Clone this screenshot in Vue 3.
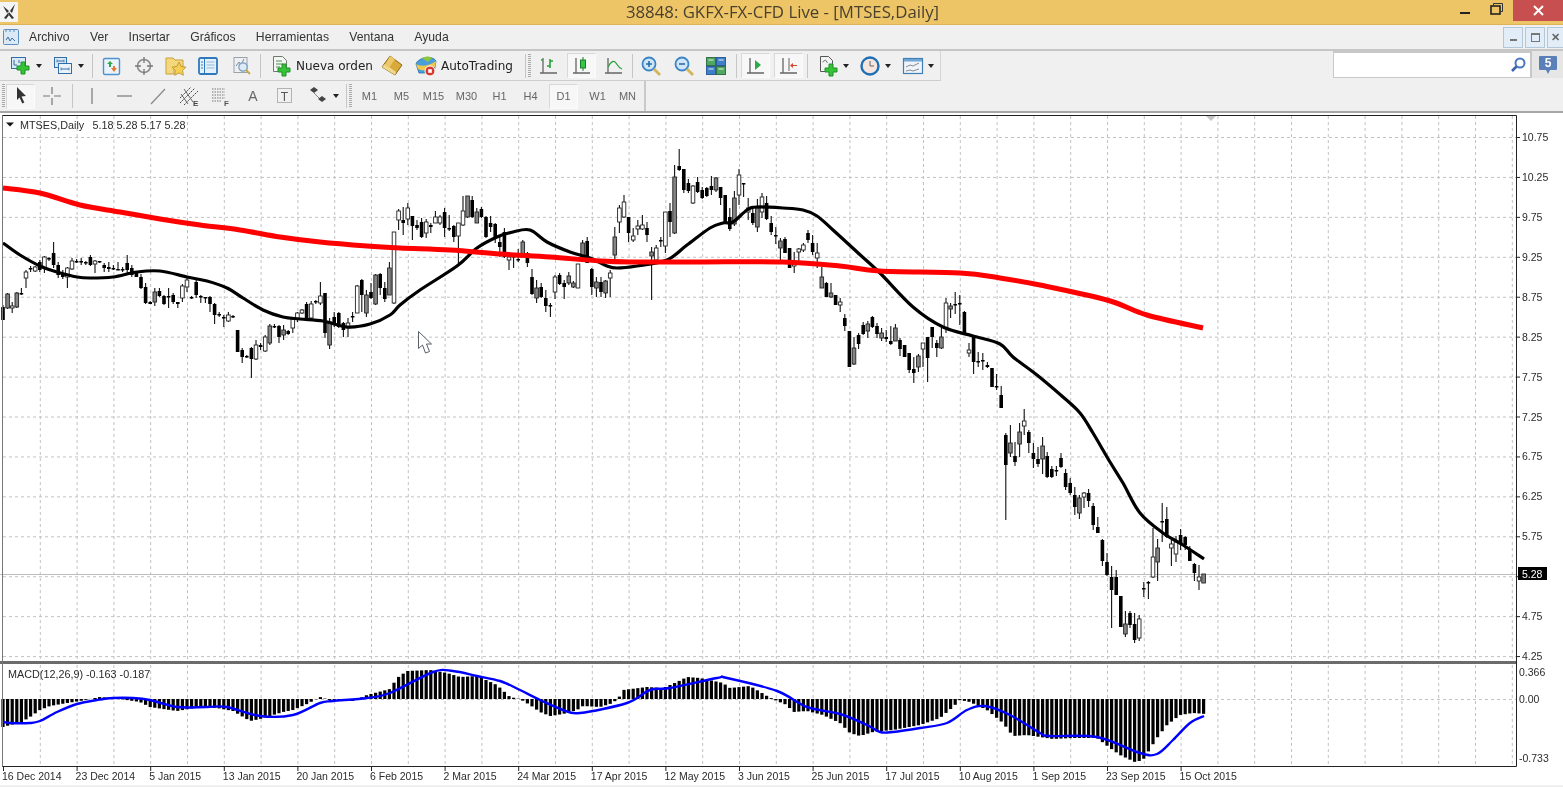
<script setup>
import { computed } from 'vue'

const icons = {
  addChart: '<rect x="1.5" y="2.5" width="14" height="11" fill="#dbe9f6" stroke="#2f6ea8"/><path d="M4 5v5h3M9 5v3" stroke="#2f6ea8" fill="none"/><path d="M11 7h4v4h4v4h-4v4h-4v-4H7v-4h4z" fill="#35c435" stroke="#1f8f2a"/>',
  profiles: '<rect x="2.5" y="2.5" width="12" height="10" fill="#dbe9f6" stroke="#2f6ea8"/><rect x="6.5" y="8.5" width="13" height="10" fill="#eaf2fa" stroke="#2f6ea8"/><path d="M5 6h7M9 14h8" stroke="#2f6ea8"/><path d="M5 4.5v3M12 4.5v3M9 12.5v3M17 12.5v3" stroke="#5a86ad"/>',
  market: '<rect x="2.5" y="3.5" width="16" height="16" rx="1.5" fill="#eaf3fb" stroke="#4d93cf" stroke-width="1.4"/><path d="M6 9l3-3 3 3h-2v3H8V9z" fill="#2fa84a"/><path d="M10 13h2v-2h2v2h2l-3 4z" fill="#e8772e"/>',
  target: '<circle cx="11" cy="11" r="6.5" fill="none" stroke="#8b8b8b" stroke-width="1.6"/><path d="M11 2v6M11 14v6M2 11h6M14 11h6" stroke="#777" stroke-width="1.3"/>',
  folderStar: '<path d="M1 3h7l2 2h8v7H9v7H1z" fill="#f5d77c" stroke="#c7a03c"/><path d="M14 7l2.2 4.5 4.8.6-3.4 3.4.8 4.8-4.4-2.3-4.4 2.3.8-4.8-3.4-3.4 4.8-.6z" fill="#f4cf52" stroke="#b48f2c" stroke-width=".8"/>',
  terminal: '<rect x="2" y="3" width="18" height="16" rx="1.5" fill="#e6f0fa" stroke="#2f78bd" stroke-width="1.8"/><path d="M7.5 4v14" stroke="#2f78bd"/><path d="M9.5 7h8M9.5 10h8M9.5 13h8" stroke="#93b7d8"/><path d="M4 7h2M4 10h2M4 13h2" stroke="#2f78bd"/>',
  tester: '<rect x="3" y="2.5" width="13" height="15" fill="#eef0f3" stroke="#9aa1a8"/><path d="M5 11l3-4 2 3 3-6" fill="none" stroke="#7c8a99"/><circle cx="12" cy="12" r="4.2" fill="#dcebf7" stroke="#7a9cbd" stroke-width="1.2"/><path d="M15 15l4 4" stroke="#c9a64a" stroke-width="2"/>',
  newOrder: '<path d="M3.5 1.5h9l4 4v11h-13z" fill="#f4f6f4" stroke="#6f7a6f"/><path d="M6 6h6M6 9h7M6 12h4" stroke="#4f8f4f"/><path d="M12 9h4v4h4v4h-4v4h-4v-4H8v-4h4z" fill="#35c435" stroke="#1f8f2a"/>',
  gold: '<path d="M9 1l12 9-7 10L1 12z" fill="#d9a93a" stroke="#8c6a1d"/><path d="M1 12l13 8 1-3L4 9z" fill="#f0d98f"/><path d="M9 1L4 10l4 3 6-9z" fill="#ecc769"/>',
  auto: '<path d="M1 9C3 2 18 0 21 6l-2 12H4z" fill="#4a9fd8" stroke="#2c6ea0" stroke-width=".8"/><path d="M1 9c4 3 14 2 20-3l-1 6c-5 4-13 4-17 2z" fill="#f0c94c"/><path d="M7 3c4-2 8-2 10 0l-4 4z" fill="#8cc63f"/><circle cx="15" cy="16" r="5" fill="#d43a2e" stroke="#fff"/><rect x="13.2" y="14.2" width="3.6" height="3.6" fill="#fff"/>',
  bars: '<path d="M5 3v15M2 18h17" stroke="#666" stroke-width="1.3" fill="none"/><path d="M3 5h2M12 4v9M12 6h3M9 11h3" stroke="#28a138" stroke-width="1.6" fill="none"/>',
  candles: '<path d="M5 3v15M2 18h17" stroke="#666" stroke-width="1.3" fill="none"/><path d="M12 2v14" stroke="#1c7d2b"/><rect x="9.5" y="5" width="5" height="8" fill="#37c447" stroke="#1c7d2b"/>',
  line: '<path d="M5 3v15M2 18h17" stroke="#666" stroke-width="1.3" fill="none"/><path d="M5 12c3-6 6-7 8-4 2 3 3 5 6 6" stroke="#28a138" stroke-width="1.3" fill="none"/>',
  zoomIn: '<circle cx="9" cy="9" r="6.5" fill="#cfe6f8" stroke="#3b85c5" stroke-width="1.8"/><path d="M6 9h6M9 6v6" stroke="#2b6da8" stroke-width="1.6"/><path d="M14 14l6 6" stroke="#d3b458" stroke-width="2.8"/>',
  zoomOut: '<circle cx="9" cy="9" r="6.5" fill="#cfe6f8" stroke="#3b85c5" stroke-width="1.8"/><path d="M6 9h6" stroke="#2b6da8" stroke-width="1.6"/><path d="M14 14l6 6" stroke="#d3b458" stroke-width="2.8"/>',
  tile: '<rect x="1.5" y="2.5" width="9" height="8" fill="#4ea860" stroke="#33704a"/><rect x="11.5" y="2.5" width="9" height="8" fill="#3f7fc9" stroke="#2d5f9a"/><rect x="1.5" y="11.5" width="9" height="8" fill="#3f7fc9" stroke="#2d5f9a"/><rect x="11.5" y="11.5" width="9" height="8" fill="#4ea860" stroke="#33704a"/><path d="M3.5 5h5M13.5 5h5M3.5 14h5M13.5 14h5" stroke="#e8f2ea"/>',
  scroll: '<path d="M5 3v15M2 18h17" stroke="#666" stroke-width="1.3" fill="none"/><path d="M10 5l6 5-6 5z" fill="#2fa84a"/>',
  shift: '<path d="M5 3v15M2 18h17" stroke="#666" stroke-width="1.3" fill="none"/><path d="M11 3v13" stroke="#666"/><path d="M19 10h-4v-2l-3 2.5 3 2.5v-2h4z" fill="#d94a2b"/>',
  indicators: '<path d="M3.5 1.5h8l4 4v11h-12z" fill="#f3f3f3" stroke="#555"/><path d="M5.5 7l3-2 2 3" fill="none" stroke="#777"/><path d="M12 9h4v4h4v4h-4v4h-4v-4H8v-4h4z" fill="#35c435" stroke="#1f8f2a"/>',
  clock: '<circle cx="11" cy="11" r="8.5" fill="#f4e6df" stroke="#1f6fb5" stroke-width="2.4"/><path d="M11 6v5h4" stroke="#666" fill="none"/>',
  template: '<rect x="1.5" y="3.5" width="19" height="15" fill="#eef4fa" stroke="#3f7fb5" stroke-width="1.2"/><rect x="2" y="4" width="18" height="2.5" fill="#6fa6d6"/><path d="M4 12l4-2 3 1 6-3M4 16l4-1 3 1 6-2" stroke="#8a8a8a" fill="none"/>',
  cursor: '<path d="M7 2l9 9-4.500.4 2.800 6-2 1-2.800-6L7 15z" fill="#333"/>',
  cross: '<path d="M11 2v7M11 13v7M2 11h7M13 11h7" stroke="#777" stroke-width="1.2"/>',
  vline: '<path d="M11 3v16" stroke="#777" stroke-width="1.2"/>',
  hline: '<path d="M3 11h15" stroke="#777" stroke-width="1.2"/>',
  trend: '<path d="M4 19L18 4" stroke="#888" stroke-width="1.2"/>',
  channel: '<path d="M2 13L13 2M2 18L17 3M6 20L20 6" stroke="#444" stroke-dasharray="2 1"/><path d="M6 4l9 13M3 9l7 10" stroke="#666"/><text x="15" y="21" font-size="8" font-weight="700" font-family="Liberation Sans" fill="#444">E</text>',
  fib: '<path d="M3 4h13M3 7h13M3 10h13M3 13h13M3 16h9" stroke="#777" stroke-dasharray="1.5 1"/><text x="15" y="21" font-size="8" font-weight="700" font-family="Liberation Sans" fill="#555">F</text>',
  letterA: '<text x="11" y="16" text-anchor="middle" font-size="14" font-family="Liberation Sans" fill="#666">A</text>',
  textBox: '<rect x="3.5" y="3.5" width="14" height="14" fill="none" stroke="#777" stroke-dasharray="1 1"/><text x="10.5" y="15.5" text-anchor="middle" font-size="12" font-family="Liberation Sans" fill="#555">T</text>',
  arrows: '<path d="M3 5l4-3 4 3-4 3z" fill="#444"/><path d="M11 14l4-3 4 3-4 3z" fill="#444"/><path d="M7 8l5 5" stroke="#888"/>',
  logo: '<path d="M3 4l6 5-2 2zM15 2l-5 7 2 2zM9 10l5 6-2 1-4-5zM8 11l-4 5 2 1 3-4z" fill="#333"/>',
  menuIcon: '<rect x="1.5" y="1.5" width="15" height="15" rx="1" fill="#dbe8f5" stroke="#5a8fc0"/><path d="M4 1v3M8 1v3M12 1v3" stroke="#5a8fc0"/><path d="M4 12l2-3 2 4 2-3 3 3" stroke="#3d6f9f" fill="none"/>',
}

// left edge of every toolbar item, the margins are worked out from these
const withGaps = (items, start) => {
  let end = start
  return items.map((item) => {
    const gap = item.at - end
    end = item.at + item.w
    return { ...item, gap }
  })
}

const row1 = withGaps([
  { at: 9, w: 33, icon: 'addChart', arrow: true },
  { at: 51, w: 33, icon: 'profiles', arrow: true },
  { at: 92, w: 1, sep: true },
  { at: 101, w: 22, icon: 'market' },
  { at: 133, w: 22, icon: 'target' },
  { at: 165, w: 22, icon: 'folderStar' },
  { at: 197, w: 22, icon: 'terminal' },
  { at: 231, w: 22, icon: 'tester' },
  { at: 260, w: 1, sep: true },
  { at: 270, w: 104, icon: 'newOrder', text: 'Nueva orden' },
  { at: 381, w: 22, icon: 'gold' },
  { at: 415, w: 103, icon: 'auto', text: 'AutoTrading' },
  { at: 525, w: 1, sep: true },
  { at: 528, w: 4, grip: true },
  { at: 539, w: 22, icon: 'bars' },
  { at: 568, w: 29, icon: 'candles', active: true },
  { at: 604, w: 22, icon: 'line' },
  { at: 633, w: 1, sep: true },
  { at: 641, w: 22, icon: 'zoomIn' },
  { at: 674, w: 22, icon: 'zoomOut' },
  { at: 706, w: 22, icon: 'tile' },
  { at: 737, w: 1, sep: true },
  { at: 742, w: 29, icon: 'scroll', active: true },
  { at: 775, w: 29, icon: 'shift', active: true },
  { at: 808, w: 1, sep: true },
  { at: 817, w: 33, icon: 'indicators', arrow: true },
  { at: 859, w: 33, icon: 'clock', arrow: true },
  { at: 902, w: 33, icon: 'template', arrow: true },
], 0)

const row2 = withGaps([
  { at: 2, w: 3, grip: true },
  { at: 6, w: 29, icon: 'cursor', active: true },
  { at: 41, w: 22, icon: 'cross' },
  { at: 72, w: 1, sep: true },
  { at: 81, w: 22, icon: 'vline' },
  { at: 114, w: 22, icon: 'hline' },
  { at: 147, w: 22, icon: 'trend' },
  { at: 178, w: 22, icon: 'channel' },
  { at: 209, w: 22, icon: 'fib' },
  { at: 242, w: 22, icon: 'letterA' },
  { at: 274, w: 22, icon: 'textBox' },
  { at: 306, w: 33, icon: 'arrows', arrow: true },
  { at: 346, w: 1, sep: true },
  { at: 349, w: 3, grip: true },
  { at: 355, w: 29, tf: 'M1' },
  { at: 387, w: 29, tf: 'M5' },
  { at: 419, w: 29, tf: 'M15' },
  { at: 452, w: 29, tf: 'M30' },
  { at: 485, w: 29, tf: 'H1' },
  { at: 516, w: 29, tf: 'H4' },
  { at: 549, w: 29, tf: 'D1', active: true },
  { at: 583, w: 29, tf: 'W1' },
  { at: 613, w: 29, tf: 'MN' },
], 0)

const menu = ['Archivo', 'Ver', 'Insertar', 'Gráficos', 'Herramientas', 'Ventana', 'Ayuda']

const barX = (i) => 3 + 4.6 * i

// 0 black, 1 gray, 2 white: type, body top, body bottom, wick top, wick bottom
const raw = [
  [0,307,320,305,320],[1,294,308,293,309],[2,306,308,302,313],[1,293,307,292,308],[0,293,294,288,295],
  [2,272,278,270,288],[0,268,269,266,272],[2,267,271,266,272],[0,262,270,260,272],[2,257,268,256,273],
  [0,258,259,257,261],[0,253,265,242,268],[0,265,275,262,278],[0,273,277,270,279],[2,268,277,267,288],
  [2,261,269,258,270],[0,261,262,259,263],[0,261,262,258,265],[0,262,263,261,265],[0,257,265,255,266],
  [2,261,264,260,273],[0,261,262,261,263],[0,265,268,263,272],[0,267,269,262,272],[0,268,269,265,270],
  [0,269,270,262,270],[0,269,270,267,272],[0,263,270,255,273],[0,268,275,265,277],[0,273,277,271,277],
  [0,277,288,274,289],[0,287,303,283,304],[0,302,304,301,304],[1,292,302,288,306],[0,291,296,288,297],
  [0,296,304,295,305],[0,296,297,288,308],[0,295,302,293,304],[0,302,304,302,308],[2,286,298,284,302],
  [2,280,287,278,292],[0,297,298,296,299],[0,282,295,278,298],[0,296,297,295,303],[0,297,298,297,303],
  [0,297,304,296,312],[0,304,315,303,324],[0,314,315,312,317],[0,317,318,315,327],[2,315,321,312,322],
  [0,316,317,315,318],[0,330,352,330,352],[0,350,357,348,363],[0,356,357,355,358],[0,348,359,347,378],
  [2,345,359,340,360],[0,345,347,343,350],[2,337,351,335,352],[1,326,343,324,345],[0,326,327,324,328],
  [0,326,337,325,343],[1,330,335,325,340],[0,331,334,330,335],[2,319,328,318,333],[2,313,319,312,322],
  [2,310,313,309,314],[0,304,318,302,320],[2,304,318,301,320],[0,301,302,300,304],[2,296,303,282,305],
  [0,293,333,293,338],[1,322,345,318,349],[0,317,325,312,327],[0,313,327,312,328],[0,323,330,322,337],
  [2,323,328,318,337],[0,316,317,312,322],[2,286,313,285,313],[0,280,295,279,312],[1,295,313,290,317],
  [0,292,298,283,299],[1,275,304,274,305],[0,274,288,273,295],[0,288,299,282,302],[1,268,295,262,295],
  [2,232,303,232,304],[2,211,220,209,230],[0,220,223,207,235],[2,208,219,203,225],[0,216,226,216,240],
  [0,225,228,220,230],[0,222,237,218,238],[2,222,233,219,238],[0,225,227,223,233],[2,217,223,211,223],
  [2,217,223,215,225],[0,212,228,208,237],[0,228,229,215,231],[0,226,237,225,242],[2,223,236,223,263],
  [2,211,225,196,226],[1,196,217,196,218],[0,200,217,196,218],[1,212,223,208,223],[0,209,217,207,218],
  [0,217,237,216,238],[0,223,227,216,232],[0,224,238,223,243],[0,242,247,237,257],[0,232,257,228,258],
  [2,257,260,252,270],[0,256,257,253,268],[0,259,260,249,262],[1,242,257,240,257],[0,253,263,252,267],
  [0,277,294,269,295],[1,288,298,280,303],[0,287,297,283,298],[0,298,306,290,312],[0,305,306,303,317],
  [2,277,292,275,299],[0,275,284,273,285],[0,283,287,280,299],[1,276,283,272,285],[1,283,287,281,288],
  [2,264,288,264,288],[1,243,257,240,262],[0,241,263,237,263],[0,269,287,268,295],[1,282,288,277,297],
  [0,282,292,277,297],[1,281,293,280,298],[2,273,278,270,297],[1,237,255,227,260],[2,208,222,205,233],
  [2,202,217,195,218],[0,217,233,217,242],[2,236,240,228,242],[2,226,229,220,235],[2,225,229,215,230],
  [0,228,235,222,242],[1,252,256,247,300],[2,248,260,245,262],[0,240,241,237,247],[2,212,246,212,253],
  [0,211,222,203,237],[1,177,233,165,234],[0,166,170,149,171],[0,169,190,169,193],[0,183,191,179,193],
  [2,186,203,185,204],[0,182,192,177,193],[0,190,198,187,199],[0,188,196,187,197],[0,186,190,176,195],
  [1,178,190,177,192],[0,187,198,187,205],[0,195,223,195,223],[0,217,229,208,231],[1,198,224,191,226],
  [2,175,195,169,205],[0,183,184,183,197],[2,208,212,198,220],[0,213,223,208,225],[1,208,227,199,232],
  [2,197,212,193,218],[0,203,219,196,220],[0,223,232,216,235],[0,235,236,227,244],[1,241,248,238,262],
  [0,239,253,237,253],[0,248,268,248,268],[2,262,266,252,273],[2,249,252,248,263],[2,245,250,243,252],
  [0,233,240,230,243],[0,243,252,235,255],[2,253,258,243,268],[1,277,288,267,288],[0,283,297,282,297],
  [1,293,297,283,298],[0,295,305,295,305],[2,302,305,298,312],[0,318,326,314,331],[0,331,367,331,367],
  [1,348,364,337,365],[0,335,344,333,349],[0,325,334,322,335],[1,324,331,321,338],[0,317,327,316,328],
  [0,326,334,323,338],[1,333,338,328,341],[0,337,339,330,342],[0,341,344,326,345],[1,328,341,324,341],
  [0,340,349,338,356],[0,345,357,345,357],[0,353,370,353,373],[0,369,373,357,383],[1,356,367,354,372],
  [2,343,349,343,367],[0,337,358,337,382],[0,327,337,327,348],[0,343,348,340,357],[1,337,348,328,349],
  [2,303,328,298,333],[1,306,309,303,318],[0,304,305,292,314],[0,303,304,295,325],[0,312,333,311,333],
  [2,350,353,343,357],[0,336,362,336,374],[0,361,362,352,367],[0,360,361,353,370],[0,365,367,362,368],
  [0,368,387,368,387],[0,386,387,374,390],[0,395,408,386,408],[0,435,465,433,520],[1,443,453,425,457],
  [0,456,462,442,466],[1,432,444,423,457],[2,421,426,409,435],[0,432,443,430,453],[0,453,459,443,468],
  [0,459,464,447,467],[1,446,459,437,474],[0,456,477,452,478],[0,469,477,466,478],[0,470,471,466,476],
  [0,458,467,453,468],[0,473,487,469,490],[0,483,493,478,495],[0,495,507,487,515],[1,498,513,495,519],
  [2,493,497,492,508],[0,493,501,489,507],[0,506,525,503,530],[0,527,533,517,533],[0,540,561,539,566],
  [0,562,575,553,576],[0,577,590,566,628],[0,577,595,570,595],[0,596,627,596,627],[1,624,634,611,637],
  [0,613,625,611,628],[0,624,640,613,643],[2,619,638,615,641],[0,588,589,582,597],[0,582,583,581,599],
  [2,557,577,528,578],[1,548,562,539,581],[0,521,522,503,542],[0,519,537,507,538],[2,544,548,540,566],
  [2,542,554,536,562],[0,535,543,529,550],[0,537,545,536,550],[0,550,561,546,561],[0,564,573,563,581],
  [2,577,581,565,590],[1,574,583,574,583],
]

const candles = raw.map((c, i) => ({
  x: barX(i), kind: c[0], top: c[1], h: c[2] - c[1], wickTop: c[3], wickBottom: c[4],
}))

const fills = ['#000', '#858585', '#fff']

const maBlack = [
  [3,243],[20,255],[40,266],[57,272],[77,277],[90,278],[113,277],[137,272],[160,271],[187,277],[207,281],[227,288],
  [243,298],[263,310],[283,317],[300,319],[323,321],[347,327],[370,324],[390,315],[400,305],[420,290],[457,266],
  [477,248],[497,237],[513,232],[530,230],[547,242],[570,252],[590,258],[607,266],[617,268],[637,266],[667,260],
  [687,245],[710,228],[723,223],[733,222],[747,210],[757,207],[783,208],[803,210],[817,216],[833,230],[857,252],
  [880,273],[913,307],[943,327],[973,336],[1000,344],[1013,357],[1037,375],[1063,397],[1080,413],[1093,433],
  [1110,462],[1123,483],[1140,513],[1163,533],[1183,545],[1204,559],
]

const maRed = [
  [3,188],[40,193],[80,205],[120,212],[160,219],[200,225],[240,230],[280,237],[320,242],[367,246],[400,248],
  [450,250],[500,254],[550,257],[600,261],[633,262],[700,262],[783,262],[840,266],[880,271],[960,273],[1000,278],
  [1040,285],[1107,300],[1147,315],[1203,328],
]

const macdPts = [
  [3,727],[10,725],[20,723],[30,717],[40,710],[50,706],[67,703],[80,701],[90,699],[100,697],[113,698],[140,702],
  [150,707],[163,709],[177,711],[200,707],[217,708],[233,711],[250,721],[260,719],[283,712],[293,710],[307,704],
  [320,697],[333,701],[353,701],[367,695],[390,689],[397,678],[407,671],[430,670],[447,673],[460,677],[477,676],
  [497,685],[510,697],[520,699],[530,705],[540,712],[550,716],[563,714],[577,710],[583,706],[600,707],[613,703],
  [620,696],[623,690],[647,687],[663,688],[677,682],[687,677],[700,678],[723,683],[730,688],[750,686],[767,696],
  [777,701],[787,705],[793,712],[807,711],[823,715],[840,723],[850,733],[860,736],[873,732],[893,730],[920,725],
  [940,718],[953,707],[960,700],[970,702],[987,710],[1003,723],[1013,736],[1027,735],[1040,737],[1053,739],
  [1073,738],[1097,738],[1110,748],[1120,755],[1135,762],[1143,760],[1148,752],[1157,738],[1167,725],[1180,715],
  [1193,713],[1206,714],
]

const histogram = computed(() => {
  const bars = []
  for (let i = 0; i < 262; i++) {
    const x = barX(i)
    const k = macdPts.findIndex((p) => p[0] >= x)
    const b = macdPts[Math.max(k, 1)]
    const a = macdPts[Math.max(k, 1) - 1]
    const y = a[1] + ((b[1] - a[1]) * (x - a[0])) / (b[0] - a[0])
    bars.push({ x, y: Math.min(y, 699), h: Math.abs(y - 699) })
  }
  return bars
})

const macdSignal = [
  [3,722],[10,723],[30,723],[40,721],[57,712],[77,704],[97,700],[113,698],[133,698],[150,700],[177,707],[207,707],
  [227,707],[260,716],[293,715],[320,703],[333,701],[367,698],[390,693],[433,672],[453,671],[477,676],[500,681],
  [520,690],[540,700],[563,710],[580,713],[627,703],[650,690],[670,688],[717,678],[727,678],[777,691],[807,707],
  [840,714],[867,725],[880,732],[893,732],[920,728],[947,723],[967,710],[985,706],[1010,715],[1040,733],[1050,736],
  [1097,737],[1140,753],[1157,754],[1173,740],[1190,723],[1204,716],
]

// catmull-rom through the read-off points, the averages are curves
const smooth = (list) => {
  let d = `M${list[0][0]} ${list[0][1]}`
  for (let i = 0; i < list.length - 1; i++) {
    const p0 = list[Math.max(i - 1, 0)]
    const p1 = list[i]
    const p2 = list[i + 1]
    const p3 = list[Math.min(i + 2, list.length - 1)]
    const c1x = p1[0] + (p2[0] - p0[0]) / 6
    const c1y = p1[1] + (p2[1] - p0[1]) / 6
    const c2x = p2[0] - (p3[0] - p1[0]) / 6
    const c2y = p2[1] - (p3[1] - p1[1]) / 6
    d += `C${c1x.toFixed(1)} ${c1y.toFixed(1)} ${c2x.toFixed(1)} ${c2y.toFixed(1)} ${p2[0]} ${p2[1]}`
  }
  return d
}

const verticals = computed(() => {
  const xs = []
  for (let k = 1; k <= 41; k++) xs.push(3.5 + 36.8 * k)
  return xs
})

const prices = ['10.75','10.25','9.75','9.25','8.75','8.25','7.75','7.25','6.75','6.25','5.75','5.25','4.75','4.25']

const dates = [
  '16 Dec 2014','23 Dec 2014','5 Jan 2015','13 Jan 2015','20 Jan 2015','6 Feb 2015','2 Mar 2015','24 Mar 2015',
  '17 Apr 2015','12 May 2015','3 Jun 2015','25 Jun 2015','17 Jul 2015','10 Aug 2015','1 Sep 2015','23 Sep 2015','15 Oct 2015',
]
</script>

<template>
  <div class="terminal">
    <div class="titlebar">
      <svg class="logo" width="18" height="20" viewBox="0 0 18 20" v-html="icons.logo"></svg>
      <span class="title">38848: GKFX-FX-CFD Live - [MTSES,Daily]</span>
      <div class="win-buttons">
        <span class="win-min"></span>
        <svg class="win-restore" width="13" height="12" viewBox="0 0 13 12">
          <path d="M3.5 2.5V.5h9v8h-2" fill="none" stroke="#333" />
          <rect x="1" y="3" width="9" height="8" fill="none" stroke="#222" stroke-width="1.6" />
        </svg>
        <span class="win-close">
          <svg width="11" height="11" viewBox="0 0 11 11">
            <path d="M1 1l9 9M10 1l-9 9" stroke="#fff" stroke-width="2" />
          </svg>
        </span>
      </div>
    </div>

    <div class="menubar">
      <svg class="menu-icon" width="18" height="18" viewBox="0 0 18 18" v-html="icons.menuIcon"></svg>
      <span v-for="m in menu" :key="m" class="menu-item">{{ m }}</span>
      <div class="mdi">
        <span class="mdi-btn"><i class="mdi-min"></i></span>
        <span class="mdi-btn"><i class="mdi-restore"></i></span>
        <span class="mdi-btn mdi-close">✕</span>
      </div>
    </div>

    <div class="row row-one">
      <div class="strip strip-one">
        <template v-for="(it, n) in row1" :key="n">
          <span v-if="it.sep" class="sep" :style="{ marginLeft: it.gap + 'px' }"></span>
          <span v-else-if="it.grip" class="grip" :style="{ marginLeft: it.gap + 'px' }"></span>
          <div v-else class="tool" :class="{ active: it.active, wide: it.text }"
            :style="{ marginLeft: it.gap + 'px', width: it.w + 'px' }">
            <svg width="22" height="22" viewBox="0 0 22 22" v-html="icons[it.icon]"></svg>
            <span v-if="it.text" class="tool-text">{{ it.text }}</span>
            <i v-if="it.arrow" class="arrow"></i>
          </div>
        </template>
      </div>
      <div class="search">
        <svg width="18" height="18" viewBox="0 0 18 18">
          <circle cx="11" cy="7" r="4.5" fill="#fff" stroke="#4a78c0" stroke-width="2" />
          <path d="M7.5 10.5L3 15" stroke="#3b66ad" stroke-width="2.6" />
        </svg>
      </div>
      <div class="messages">
        <svg width="20" height="22" viewBox="0 0 20 22">
          <path d="M2 2h16a1 1 0 0 1 1 1v12a1 1 0 0 1-1 1h-6l-2 4-2-4H2a1 1 0 0 1-1-1V3a1 1 0 0 1 1-1z" fill="#5b7fb8" />
          <text x="10" y="13" text-anchor="middle" font-size="12" font-weight="700" font-family="Liberation Sans" fill="#fff">5</text>
        </svg>
      </div>
    </div>

    <div class="row row-two">
      <div class="strip strip-two">
        <template v-for="(it, n) in row2" :key="n">
          <span v-if="it.sep" class="sep" :style="{ marginLeft: it.gap + 'px' }"></span>
          <span v-else-if="it.grip" class="grip" :style="{ marginLeft: it.gap + 'px' }"></span>
          <div v-else class="tool" :class="{ active: it.active, tf: it.tf }"
            :style="{ marginLeft: it.gap + 'px', width: it.w + 'px' }">
            <template v-if="it.tf">{{ it.tf }}</template>
            <svg v-else width="22" height="22" viewBox="0 0 22 22" v-html="icons[it.icon]"></svg>
            <i v-if="it.arrow" class="arrow"></i>
          </div>
        </template>
      </div>
    </div>

    <svg class="chart" width="1563" height="672" viewBox="0 113 1563 672">
      <rect x="0" y="113" width="1563" height="672" fill="#fff" />

      <!-- grid -->
      <g stroke="#c2c2c2" stroke-dasharray="3 3">
        <line v-for="x in verticals" :key="x" :x1="x" :x2="x" y1="116" y2="661" />
        <line v-for="x in verticals" :key="'m' + x" :x1="x" :x2="x" y1="665" y2="766" />
        <line v-for="(p, i) in prices" :key="p" x1="3" x2="1516" :y1="137.5 + i * 39.93" :y2="137.5 + i * 39.93" />
        <line x1="3" x2="1516" y1="699.5" y2="699.5" />
      </g>
      <line x1="0" x2="1516" y1="574.5" y2="574.5" stroke="#bdbdbd" />
      <path d="M1206 116h10l-5 5z" fill="#c4c4c4" />

      <!-- candles -->
      <g v-for="c in candles" :key="c.x">
        <line :x1="c.x" :x2="c.x" :y1="c.wickTop" :y2="c.wickBottom" stroke="#111" stroke-width="1.1" />
        <rect :x="c.x - 1.8" :y="c.top" width="3.6" :height="Math.max(c.h, 1.5)" :fill="fills[c.kind]"
          :stroke="c.kind === 0 ? 'none' : '#222'" stroke-width=".9" />
      </g>

      <path :d="smooth(maBlack)" fill="none" stroke="#000" stroke-width="3.2" stroke-linejoin="round" />
      <path :d="smooth(maRed)" fill="none" stroke="#f00" stroke-width="5" stroke-linejoin="round" />

      <!-- cursor -->
      <path d="M418.5 331.5v17l4-3.5 3 8 4-1.5-3-7.5h5z" fill="#fff" stroke="#5a6068" />

      <!-- labels -->
      <path d="M6 122.5h8l-4 4z" fill="#111" />
      <text class="lbl top" x="20" y="128.5">MTSES,Daily</text>
      <text class="lbl top" x="92.5" y="128.5">5.18 5.28 5.17 5.28</text>

      <!-- macd -->
      <rect v-for="b in histogram" :key="b.x" :x="b.x - 1.6" :y="b.y" width="3.2" :height="b.h" fill="#000" />
      <path :d="smooth(macdSignal)" fill="none" stroke="#0000ff" stroke-width="2.4" stroke-linejoin="round" />
      <text class="lbl top" x="8" y="678">MACD(12,26,9) -0.163 -0.187</text>

      <!-- frame -->
      <rect x="0" y="661" width="1516" height="3" fill="#6b6b6b" />
      <path d="M2.5 116v650.5H1516.5V115.5H2.5z" fill="none" stroke="#222" />
      <path d="M2.5 116v650" fill="none" stroke="#777" />

      <!-- axes -->
      <g v-for="(p, i) in prices" :key="'t' + p">
        <line x1="1516" x2="1520" :y1="137.5 + i * 39.93" :y2="137.5 + i * 39.93" stroke="#222" />
        <text class="lbl" x="1522" :y="141 + i * 39.93">{{ p }}</text>
      </g>
      <rect x="1518" y="567" width="29" height="13" fill="#000" />
      <text class="lbl price-tag" x="1522" y="577.5">5.28</text>
      <text class="lbl" x="1519" y="676">0.366</text>
      <text class="lbl" x="1519" y="703">0.00</text>
      <text class="lbl" x="1519" y="762">-0.733</text>
      <g v-for="(d, i) in dates" :key="d">
        <line :x1="3.5 + i * 73.6" :x2="3.5 + i * 73.6" y1="766" y2="771" stroke="#222" />
        <text class="lbl" :x="2 + i * 73.6" y="780">{{ d }}</text>
      </g>
    </svg>
    <div class="footer"></div>
  </div>
</template>

<style>
html,
body {
  margin: 0;
  overflow: hidden;
}
</style>

<style scoped>
.terminal {
  width: 1563px;
  height: 787px;
  overflow: hidden;
  background: #f0f0f0;
  font-family: "Liberation Sans", Arial, sans-serif;
  color: #222;
  filter: blur(0.35px);
}

.titlebar {
  height: 24px;
  background: #edc566;
  border-bottom: 1px solid #dcb358;
  display: flex;
  justify-content: center;
  position: relative;
}

.logo {
  position: absolute;
  left: 0;
  top: 2px;
  background: #f4f4f4;
}

.title {
  font-family: "Open Sans", sans-serif;
  font-size: 16.8px;
  line-height: 24px;
  color: #4a4030;
  margin-left: 2px;
}

.win-buttons {
  position: absolute;
  right: 0;
  top: 0;
  display: flex;
}

.win-min {
  width: 10px;
  height: 2px;
  background: #222;
  margin: 12px 20px 0 0;
}

.win-restore {
  margin: 3px 10px 0 0;
}

.win-close {
  width: 50px;
  height: 21px;
  background: #c84f4f;
  display: flex;
  align-items: center;
  justify-content: center;
}

.menubar {
  height: 24px;
  display: flex;
  align-items: center;
  padding-left: 2px;
  font-size: 12.2px;
  color: #333;
  gap: 20.3px;
}

.menu-icon {
  margin-right: -11.3px;
}

.mdi {
  margin-left: auto;
  display: flex;
  gap: 2px;
}

.mdi-btn {
  width: 18px;
  height: 19px;
  background: #e2edf7;
  border: 1px solid #b3c7da;
  display: flex;
  align-items: center;
  justify-content: center;
  font-size: 11px;
  color: #666;
}

.mdi-close {
  width: 15px;
  font-weight: 700;
  border-right: 0;
}

.mdi-min {
  width: 7px;
  height: 2px;
  background: #777;
  margin-top: 6px;
}

.mdi-restore {
  width: 7px;
  height: 6px;
  border: 1px solid #777;
  border-top-width: 2px;
}

.row {
  display: flex;
}

.row-one {
  height: 30px;
  border-top: 2px solid #c6c6c6;
}

.row-two {
  height: 30px;
  border-bottom: 2px solid #a6a6a6;
}

.strip {
  display: flex;
  align-items: center;
  box-sizing: border-box;
}

.strip-one {
  width: 941px;
  border-right: 1px solid #d4d4d4;
  border-bottom: 1px solid #cdcdcd;
}

.strip-two {
  width: 646px;
  border-right: 2px solid #c9c9c9;
}

.tool {
  flex: none;
  height: 25px;
  display: flex;
  align-items: center;
  justify-content: center;
  box-sizing: border-box;
  font-size: 11px;
  color: #666;
}

.tool.wide {
  justify-content: flex-start;
}

.tool.active {
  background: #f7f7f7;
  border: 1px solid #d8d8d8;
  border-right-color: #fbfbfb;
  border-bottom-color: #fbfbfb;
}

.tool-text {
  margin-left: 4px;
  font-family: "DejaVu Sans", sans-serif;
  font-size: 12px;
  color: #222;
  white-space: nowrap;
}

.arrow {
  flex: none;
  margin-left: 4px;
  width: 0;
  height: 0;
  border-left: 3.5px solid transparent;
  border-right: 3.5px solid transparent;
  border-top: 4px solid #222;
}

.sep {
  flex: none;
  width: 1px;
  height: 24px;
  background: #c6c6c6;
}

.grip {
  flex: none;
  width: 3px;
  height: 24px;
  background: repeating-linear-gradient(#aaa 0 1px, transparent 1px 2px);
}

.search {
  width: 199px;
  height: 27px;
  margin-left: 392px;
  box-sizing: border-box;
  background: #fff;
  border: 1px solid #c8c8c8;
  border-width: 2px 2px 1px 1px;
  display: flex;
  align-items: center;
  justify-content: flex-end;
  padding-right: 3px;
}

.messages {
  width: 31px;
  height: 27px;
  background: #e6e6e6;
  display: flex;
  align-items: center;
  justify-content: center;
}

.chart {
  display: block;
}

.lbl {
  font-family: "Liberation Sans", Arial, sans-serif;
  font-size: 10.5px;
  fill: #2b2b2b;
}

.lbl.top {
  font-size: 10.8px;
}

.price-tag {
  fill: #fff;
}

.footer {
  height: 2px;
  background: #f0f0f0;
}
</style>
